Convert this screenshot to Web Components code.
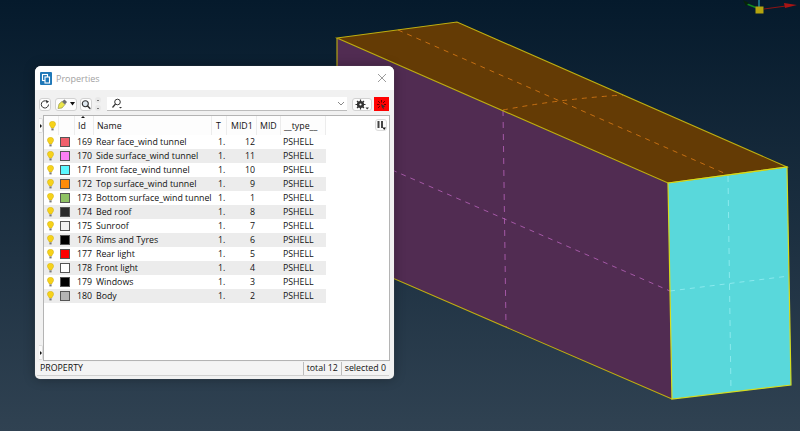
<!DOCTYPE html>
<html>
<head>
<meta charset="utf-8">
<title>Properties</title>
<style>
html, body { margin: 0; padding: 0; width: 800px; height: 431px; overflow: hidden; }
</style>
</head>
<body>
<model-view>
    <prop-window title-text="Properties" footer="PROPERTY" total="total 12" selected="selected 0"></prop-window>
</model-view>
<script>
class ModelView extends HTMLElement {
    constructor() {
        super();
        this.attachShadow({ mode: 'open' });
        this.shadowRoot.innerHTML = `
        <style>
            :host { display: block; position: relative; width: 800px; height: 431px; overflow: hidden;
                background: linear-gradient(180deg, #051a2c 0%, #304252 100%); }
            svg { position: absolute; left: 0; top: 0; }
        </style>
        <svg width="800" height="431" viewBox="0 0 800 431">
            <polygon points="337,38 668,183 672,399 337,254" fill="#512c52"/>
            <polygon points="337,38 457,22 787,167 668,183" fill="#643b05"/>
            <polygon points="668,183 787,167 791,385 672,399" fill="#59d8db"/>
            <g fill="none" stroke-width="1" stroke-dasharray="5 5">
                <path d="M398 30 L724 173" stroke="#c46e12"/>
                <path d="M503 110 Q560 99 623 95" stroke="#c46e12"/>
                <path d="M503 110 L506 327" stroke="#a458a6" stroke-dasharray="6 6"/>
                <path d="M337 146 L670 291" stroke="#a458a6"/>
                <path d="M728 176 L731 392" stroke="#8aeaee" stroke-dasharray="6 6"/>
                <path d="M670 291 L789 276" stroke="#8aeaee"/>
            </g>
            <g fill="none" stroke="#bfae10" stroke-width="1.1">
                <path d="M337 38 L457 22 L787 167 L668 183 Z"/>
                <path d="M337 38 L337 254 L672 399"/>
            </g>
            <path d="M668 183 L787 167 L791 385 L672 399 Z" fill="none" stroke="#d6dc1e" stroke-width="1.2"/>
            <g>
                <path d="M759 0 V8" stroke="#1b6a80" stroke-width="2"/>
                <path d="M747 4 L757 8" stroke="#0f8a1c" stroke-width="1.5"/>
                <path d="M743 0 L749 3 L746 6 Z" fill="#06240a"/>
                <path d="M764 9 L786 6" stroke="#8c1414" stroke-width="1"/>
                <path d="M784 3 L797 5 L785 8 Z" fill="#a81414"/>
                <rect x="755.5" y="6.5" width="8" height="7" fill="#b4a40e"/>
            </g>
        </svg>
        <slot></slot>
`
    }
}

class PropWindow extends HTMLElement {
    constructor() {
        super();
        this.attachShadow({ mode: 'open' });
        this.shadowRoot.innerHTML = `
        <style>
            :host { display: flex; flex-direction: column; position: absolute; left: 35px; top: 66px; width: 359px; height: 313px;
                box-sizing: border-box; background: #f1f1f1; border-radius: 6px 6px 5px 5px;
                box-shadow: 0 0 1px #777, 0 0 12px rgba(0,0,0,.3);
                font: 8.8px "Open Sans", "Liberation Sans", sans-serif; color: #111; }
            .title { display: flex; align-items: center; height: 24px; flex: none; background: #fff; padding: 0 7px 0 5px; gap: 4px; border-radius: 6px 6px 0 0; }
            .title span { flex: 1; color: #a2a2a2; font-size: 9px; }
            .body { flex: 1; display: flex; flex-direction: column; padding: 0 4px 3px 3px; min-height: 0; }
        </style>
        <div class="title">
            <svg width="12" height="13" viewBox="0 0 12 13">
                <rect width="12" height="13" rx="1" fill="#1f78b8"/>
                <rect x="2.5" y="2.5" width="5" height="6" fill="none" stroke="#fff" stroke-width="1.1"/>
                <rect x="5" y="5" width="4.5" height="6" fill="#1f78b8" stroke="#fff" stroke-width="1.1"/>
            </svg>
            <span>Properties</span>
            <svg width="10" height="10" viewBox="0 0 10 10"><path d="M1 1 L9 9 M9 1 L1 9" stroke="#9c9c9c" stroke-width="1" fill="none"/></svg>
        </div>
        <div class="body">
            <prop-toolbar></prop-toolbar>
            <prop-table></prop-table>
            <prop-status footer="${this.getAttribute('footer')}" total="${this.getAttribute('total')}" selected="${this.getAttribute('selected')}"></prop-status>
        </div>
`
    }
}

class PropToolbar extends HTMLElement {
    constructor() {
        super();
        this.attachShadow({ mode: 'open' });
        this.shadowRoot.innerHTML = `
        <style>
            :host { display: flex; align-items: center; flex: none; height: 25px; padding: 3px 1px 0 1px; box-sizing: border-box; }
            .btn { display: flex; align-items: center; justify-content: center; height: 13px; box-sizing: border-box;
                background: #fdfdfd; border: 1px solid #d2d2d2; border-radius: 3px; flex: none; }
            .search { flex: 1; display: flex; align-items: center; justify-content: space-between; height: 14px; box-sizing: border-box;
                background: #fff; border-bottom: 1px solid #bcbcbc; padding: 0 2px 0 4px; margin: 0 5px 0 6px; }
            .spin { display: flex; flex-direction: column; gap: 2px; margin-left: 3px; flex: none; }
            .spin i { display: block; width: 6px; height: 6px; border-radius: 3px; background: #e8e8e8; position: relative; }
            .spin i::after { content: ""; position: absolute; left: 2px; top: 2.5px; width: 2px; height: 1px; background: #777; }
            .red { width: 15px; height: 14px; background: #f00; margin-left: 2px; display: flex; align-items: center; justify-content: center; flex: none; }
        </style>
        <div class="btn" style="width:12px">
            <svg width="11" height="11" viewBox="0 0 10 10"><path d="M8.5 5 A3.6 3.6 0 1 1 7 2" fill="none" stroke="#333" stroke-width="1"/><path d="M6 .5 L9 2 L6.5 4 Z" fill="#333"/></svg>
        </div>
        <div class="btn" style="width:22px;margin-left:4px;gap:2px">
            <svg width="11" height="10" viewBox="0 0 11 10"><path d="M1 9.5 L2 5 L5 2.5 L8 5.5 L5 9 Z" fill="#ece64a" stroke="#8a8a40" stroke-width=".6"/><path d="M5 2.5 L7.5 .5 L10 3 L8 5.5 Z" fill="#6f6f6f"/></svg>
            <svg width="5" height="4" viewBox="0 0 5 4"><path d="M0 0 H5 L2.5 3.5 Z" fill="#111"/></svg>
        </div>
        <div class="btn" style="width:12px;margin-left:3px">
            <svg width="11" height="11" viewBox="0 0 10 10"><circle cx="4.3" cy="4.3" r="3" fill="#dfe8f0" stroke="#333" stroke-width="1.1"/><path d="M6.5 6.5 L9.3 9.3" stroke="#333" stroke-width="1.5"/></svg>
        </div>
        <div class="spin"><i></i><i></i></div>
        <div class="search">
            <svg width="12" height="11" viewBox="0 0 12 11"><circle cx="6.5" cy="4" r="2.8" fill="none" stroke="#333" stroke-width="1"/><path d="M4.5 6 L1.5 9.5" stroke="#333" stroke-width="1.2"/><path d="M8 9 H11 L9.5 10.5 Z" fill="#333"/></svg>
            <svg width="8" height="5" viewBox="0 0 8 5"><path d="M1 1 L4 4 L7 1" fill="none" stroke="#888" stroke-width="1"/></svg>
        </div>
        <div class="btn" style="width:20px">
            <svg width="14" height="11" viewBox="0 0 14 11"><circle cx="5.5" cy="5.5" r="2.6" fill="none" stroke="#333" stroke-width="2"/><path d="M5.5 .5 V10.5 M.5 5.5 H10.5 M2 2 L9 9 M9 2 L2 9" stroke="#333" stroke-width="1.2"/><circle cx="5.5" cy="5.5" r="1.1" fill="#fafafa"/><path d="M10.5 8.5 H14 L12.2 10.5 Z" fill="#333"/></svg>
        </div>
        <div class="red">
            <svg width="11" height="11" viewBox="0 0 11 11"><path d="M5.5 1 V3.5 M1 5.5 H3.5 M2 2 L4 4 M9 2 L7 4 M10 5.5 H8 M2 9 L4 7" stroke="#5a0000" stroke-width=".9"/><path d="M5 5 L9.5 7.5 L7.5 8 L8 10.5 L6 8.5 Z" fill="#333"/></svg>
        </div>
`
    }
}

const ROWS = [
    [169, '#f0606c', 'Rear face_wind tunnel', 12],
    [170, '#fb7ff5', 'Side surface_wind tunnel', 11],
    [171, '#5cf8ff', 'Front face_wind tunnel', 10],
    [172, '#ff8c0a', 'Top surface_wind tunnel', 9],
    [173, '#8fc264', 'Bottom surface_wind tunnel', 1],
    [174, '#2a2a2a', 'Bed roof', 8],
    [175, '#f2f2f2', 'Sunroof', 7],
    [176, '#000000', 'Rims and Tyres', 6],
    [177, '#ff0000', 'Rear light', 5],
    [178, '#ffffff', 'Front light', 4],
    [179, '#000000', 'Windows', 3],
    [180, '#b4b4b4', 'Body', 2]
];

const COLS = '15px 16px 19px 118px 15px 30px 24px 45px';
const BULB = `<svg width="7" height="10" viewBox="0 0 7 10"><path d="M3.5 .3 C1.5 .3 .4 1.6 .4 3.2 C.4 4.8 2 5.6 2.2 7 H4.8 C5 5.6 6.6 4.8 6.6 3.2 C6.6 1.6 5.5 .3 3.5 .3 Z" fill="#f6d21a" stroke="#c8a200" stroke-width=".4"/><rect x="2.4" y="7.4" width="2.2" height="2" fill="#777"/></svg>`;

class PropTable extends HTMLElement {
    constructor() {
        super();
        this.attachShadow({ mode: 'open' });
        const rows = ROWS.map((r, i) => `
            <div class="row ${i % 2 ? 'alt' : ''}">
                <div class="bulb">${BULB}</div>
                <div class="swatch"><i style="background:${r[1]}"></i></div>
                <div class="id">${r[0]}</div>
                <div class="name">${r[2]}</div>
                <div class="t">1.</div>
                <div class="mid">${r[3]}</div>
                <div></div>
                <div class="type">PSHELL</div>
            </div>`).join('');
        this.shadowRoot.innerHTML = `
        <style>
            :host { display: flex; flex: 1; min-height: 0; }
            .side { width: 5px; flex: none; display: flex; flex-direction: column; justify-content: space-between; padding: 3px 0 1px 1px; box-sizing: border-box; }
            .side b { display: flex; align-items: center; justify-content: center; width: 4px; height: 15px; background: #fafafa; border: 1px solid #ddd; border-left: 0; box-sizing: border-box; border-radius: 0 2px 2px 0; font-size: 0; }
            .side b::after { content: ""; border-left: 2px solid #111; border-top: 2px solid transparent; border-bottom: 2px solid transparent; }
            .panel { flex: 1; background: #fff; border: 1px solid #b4b4b4; position: relative; min-width: 0; }
            .head, .row { display: grid; grid-template-columns: ${COLS}; width: 282px; }
            .head { height: 19px; background: #fdfdfd; }
            .head div { border-right: 1px solid #ececec; display: flex; align-items: center; padding-left: 3px; box-sizing: border-box; position: relative; }
            .head .up::before { content: ""; position: absolute; left: 6px; top: 0; border-bottom: 2px solid #111; border-left: 2.5px solid transparent; border-right: 2.5px solid transparent; }
            .row { height: 14px; line-height: 14px; white-space: nowrap; }
            .row.alt { background: #ececec; }
            .bulb { display: flex; align-items: center; padding-left: 3px; }
            .swatch { display: flex; align-items: center; padding-left: 1px; }
            .swatch i { display: block; width: 10px; height: 10px; box-sizing: border-box; border: 1px solid #555; }
            .id { text-align: right; padding-right: 2px; }
            .name { padding-left: 2px; }
            .t { padding-left: 6px; }
            .mid { text-align: right; padding-right: 2px; }
            .type { padding-left: 2px; }
            .corner { position: absolute; right: 2px; top: 3px; width: 12px; height: 12px; box-sizing: border-box; background: #fafafa; border: 1px solid #dcdcdc; border-radius: 3px; display: flex; align-items: center; justify-content: center; }
        </style>
        <div class="side"><b></b><b></b></div>
        <div class="panel">
            <div class="head">
                <div style="justify-content:center;padding:0 0 0 2px">${BULB}</div>
                <div></div>
                <div class="up">Id</div>
                <div>Name</div>
                <div style="padding-left:4px">T</div>
                <div style="padding-left:4px">MID1</div>
                <div>MID</div>
                <div>__type__</div>
            </div>
            ${rows}
            <div class="corner">
                <svg width="10" height="9" viewBox="0 0 10 9"><path d="M1.5 0 H3.5 V7 H1.5 Z M5 0 H7 V7 H5 Z" fill="#444"/><path d="M6.5 6.5 H10 L8.2 9 Z" fill="#111"/></svg>
            </div>
        </div>
`
    }
}

class PropStatus extends HTMLElement {
    constructor() {
        super();
        this.attachShadow({ mode: 'open' });
        this.shadowRoot.innerHTML = `
        <style>
            :host { display: flex; flex: none; height: 13px; margin: 1px 1px 0 -1px; background: #f4f4f4; border-bottom: 1px solid #d0d0d0; box-sizing: content-box; line-height: 13px; }
            .f { flex: 1; padding-left: 3px; }
            .c { border-left: 1px solid #bdbdbd; padding: 0 3px; height: 13px; }
        </style>
        <div class="f">${this.getAttribute('footer')}</div>
        <div class="c">${this.getAttribute('total')}</div>
        <div class="c">${this.getAttribute('selected')}</div>
`
    }
}

customElements.define('prop-status', PropStatus);
customElements.define('prop-table', PropTable);
customElements.define('prop-toolbar', PropToolbar);
customElements.define('prop-window', PropWindow);
customElements.define('model-view', ModelView);
</script>
</body>
</html>
